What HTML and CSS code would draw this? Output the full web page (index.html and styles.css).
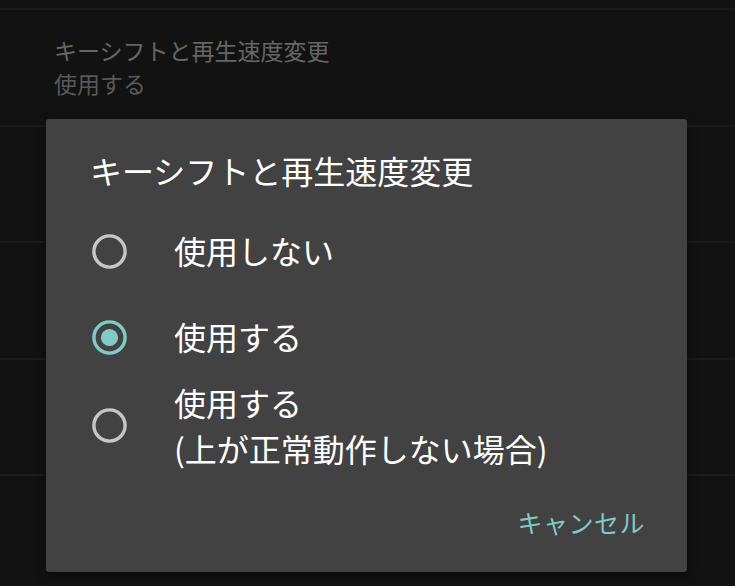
FILE: index.html
```html
<!DOCTYPE html>
<html lang="ja">
<head>
    <meta charset="UTF-8">
    <meta name="viewport" content="width=device-width, initial-scale=1.0">
    <title>キーシフトと再生速度変更</title>
    <link rel="stylesheet" href="styles.css">
</head>
<body>
    <!-- settings list behind the dialog -->
    <div class="settings">
        <div class="pref pref-cut"></div>
        <div class="pref">
            <div class="pref-title">キーシフトと再生速度変更</div>
            <div class="pref-summary">使用する</div>
        </div>
        <div class="pref"></div>
        <div class="pref"></div>
        <div class="pref"></div>
        <div class="pref"></div>
    </div>

    <!-- choice dialog -->
    <div class="dialog">
        <div class="dialog-title">キーシフトと再生速度変更</div>

        <div class="choices">
            <div class="choice">
                <svg class="radio" viewBox="0 0 35 35">
                    <circle cx="17.5" cy="17.5" r="15.6" fill="none" stroke="currentColor" stroke-width="3.4"/>
                </svg>
                <div class="choice-label">使用しない</div>
            </div>
            <div class="choice checked">
                <svg class="radio" viewBox="0 0 35 35">
                    <circle cx="17.5" cy="17.5" r="15.6" fill="none" stroke="currentColor" stroke-width="3.4"/>
                    <circle cx="17.5" cy="17.5" r="8.6" fill="currentColor"/>
                </svg>
                <div class="choice-label">使用する</div>
            </div>
            <div class="choice">
                <svg class="radio" viewBox="0 0 35 35">
                    <circle cx="17.5" cy="17.5" r="15.6" fill="none" stroke="currentColor" stroke-width="3.4"/>
                </svg>
                <div class="choice-label">使用する<br>(上が正常動作しない場合)</div>
            </div>
        </div>

        <div class="dialog-buttons">
            <button class="text-btn">キャンセル</button>
        </div>
    </div>
</body>
</html>
```

FILE: styles.css
```css
body {
    margin: 0;
    background-color: #121212;
    font-family: "Noto Sans CJK JP", "Noto Sans", sans-serif;
    overflow: hidden;
}
.settings {
    display: flex;
    flex-direction: column;
}
.pref {
    height: 114.5px;
    border-bottom: 2px solid #1c1c1c;
    padding-left: 54px;
    display: flex;
    flex-direction: column;
    justify-content: center;
}
.pref-cut {
    height: 8px;
}
.pref-title {
    font-size: 23px;
    line-height: 33px;
    color: #666666;
}
.pref-summary {
    font-size: 23px;
    line-height: 33px;
    color: #595959;
}
.dialog {
    position: absolute;
    left: 46px;
    top: 119px;
    width: 641px;
    height: 453px;
    box-sizing: border-box;
    background-color: #424242;
    border-radius: 3px;
    box-shadow: 0 3px 10px rgba(0,0,0,0.5);
    display: flex;
    flex-direction: column;
}
.dialog-title {
    padding: 32px 44px 0;
    font-size: 32px;
    line-height: 38px;
    color: #ffffff;
}
.choices {
    padding-top: 19px;
}
.choice {
    min-height: 86px;
    display: flex;
    align-items: center;
    padding-left: 46px;
}
.radio {
    width: 35px;
    height: 35px;
    flex-shrink: 0;
    color: rgba(255,255,255,0.7);
}
.checked .radio {
    color: #80cbc4;
}
.choice-label {
    margin-left: 47px;
    font-size: 32px;
    line-height: 45.5px;
    color: #ffffff;
}
.dialog-buttons {
    margin-top: auto;
    display: flex;
    justify-content: flex-end;
    padding: 0 26px 19px;
}
.text-btn {
    height: 63px;
    padding: 0 16px;
    border: none;
    background: none;
    font-family: inherit;
    font-size: 25px;
    letter-spacing: 0.5px;
    color: #80cbc4;
}
```
